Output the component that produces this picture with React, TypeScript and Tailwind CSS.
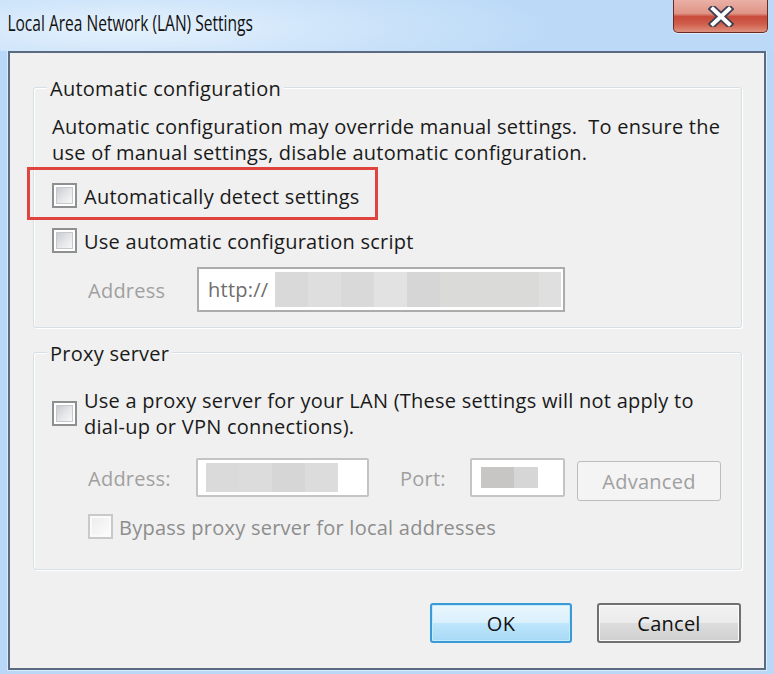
import React from "react";

const font = { fontFamily: '"Open Sans", "Noto Sans", "Liberation Sans", sans-serif' };

function Check({ disabled = false }: { disabled?: boolean }) {
  return (
    <div
      className={
        "w-[25px] h-[25px] shrink-0 border-2 p-[2px] " +
        (disabled ? "border-[#c9c9c9] bg-[#fafafa]" : "border-[#8e8f8f] bg-white")
      }
    >
      <div
        className={
          "w-full h-full " +
          (disabled
            ? "bg-[linear-gradient(135deg,#ededed,#fbfbfb)]"
            : "border border-[#c5c8cc] bg-[linear-gradient(135deg,#c9ccd1_0%,#e6e7e9_55%,#f7f7f7_100%)]")
        }
      />
    </div>
  );
}

function Group({ title, children, className = "" }: { title: string; children: React.ReactNode; className?: string }) {
  return (
    <div
      className={
        "relative border border-[#d5dfe5] rounded-[3px] shadow-[inset_1px_1px_0_#ffffff,1px_1px_0_#ffffff] " +
        className
      }
    >
      <div className="absolute left-[13px] top-[-12px] px-[3px] bg-[#f0f0f0] leading-[26px] text-[#1a1a1a]">
        {title}
      </div>
      {children}
    </div>
  );
}

function Blocks({ items }: { items: [number, string][] }) {
  return (
    <div className="flex h-full">
      {items.map(([w, c], i) => (
        <div key={i} style={{ width: w, background: c }} className="h-full" />
      ))}
    </div>
  );
}

export default function App() {
  return (
    <div className="w-[774px] h-[674px] bg-[#b9d8f7] flex flex-col overflow-hidden" style={font}>
      {/* Title bar */}
      <div className="h-[51px] shrink-0 relative flex items-start bg-[radial-gradient(ellipse_420px_60px_at_130px_28px,#e6f2fd_0%,#cfe5fa_50%,#bcdaf7_100%)]">
        <div className="pl-[10px] pt-[8px] text-[21px] leading-[30px] text-[#111] whitespace-nowrap origin-left scale-x-[0.74]">
          Local Area Network (LAN) Settings
        </div>
        <div className="absolute right-[6px] top-0 w-[95px] h-[33px] rounded-b-[5px] border border-t-0 border-[#6b2b25] bg-[linear-gradient(180deg,#eab0a6_0%,#df9486_42%,#c8493a_52%,#cf5e4d_75%,#e0907e_100%)] flex items-center justify-center shadow-[0_1px_0_#ffffff80]">
          <svg width="26" height="21" viewBox="0 0 26 21">
            <path d="M5 3 L21 18 M21 3 L5 18" stroke="#3d3f52" strokeWidth="7.5" strokeLinecap="square" fill="none" />
            <path d="M5 3 L21 18 M21 3 L5 18" stroke="#ffffff" strokeWidth="4" strokeLinecap="square" fill="none" />
          </svg>
        </div>
      </div>

      {/* Window body */}
      <div className="mx-[8px] mb-[4px] flex-1 border-2 border-[#5a6a80] bg-[#f0f0f0] shadow-[0_0_0_1px_#d8eafb] pl-[23px] pr-[22px] pt-[34px] pb-[25px] flex flex-col text-[20px] tracking-[0.25px] leading-[26px] text-[#1a1a1a]">
        <Group title="Automatic configuration" className="h-[241px]">
          <div className="pl-[18px] pt-[26px]">
            <div className="whitespace-nowrap">Automatic configuration may override manual settings.&nbsp; To ensure the</div>
            <div>use of manual settings, disable automatic configuration.</div>
            <div className="relative mt-[17px] flex items-center gap-[7px] h-[25px]">
              <Check />
              <span className="pt-[2px]">Automatically detect settings</span>
              <div className="absolute left-[-25px] top-[-16px] w-[351px] h-[53px] border-[3px] border-[#e0443e]" />
            </div>
            <div className="mt-[20px] flex items-center gap-[7px] h-[25px]">
              <Check />
              <span className="pt-[2px]">Use automatic configuration script</span>
            </div>
            <div className="mt-[14px] flex items-center h-[45px]">
              <span className="w-[145px] pl-[36px] pt-[2px] text-[#a0a0a0]">Address</span>
              <div className="w-[368px] h-[45px] border-2 border-[#acacac] bg-white p-[2px]">
                <div className="flex h-full items-stretch">
                  <div className="w-[75px] pl-[7px] text-[#6d6d6d] flex items-center bg-white">http://</div>
                  <div className="flex-1 py-[1px]">
                    <Blocks
                      items={[
                        [33, "#d9d9d9"],
                        [33, "#dedede"],
                        [33, "#d9d9d9"],
                        [33, "#e2e2e2"],
                        [33, "#d6d6d6"],
                        [99, "#dadad9"],
                        [22, "#dfdfdf"],
                      ]}
                    />
                  </div>
                </div>
              </div>
            </div>
          </div>
        </Group>

        <Group title="Proxy server" className="mt-[24px] h-[218px]">
          <div className="pl-[18px] pt-[33px]">
            <div className="flex items-center gap-[7px]">
              <Check />
              <div className="whitespace-nowrap pt-[2px]">
                <div>Use a proxy server for your LAN (These settings will not apply to</div>
                <div>dial-up or VPN connections).</div>
              </div>
            </div>
            <div className="mt-[18px] flex items-start">
              <div className="h-[39px] w-[144px] pl-[36px] pt-[2px] flex items-center text-[#a0a0a0]">Address:</div>
              <div className="w-[173px] h-[39px] border-2 border-[#c4c4c4] rounded-[2px] bg-white px-[8px] py-[3px]">
                <Blocks
                  items={[
                    [33, "#dadada"],
                    [33, "#dcdcdc"],
                    [33, "#d6d6d6"],
                    [33, "#dcdcdc"],
                  ]}
                />
              </div>
              <div className="h-[39px] w-[101px] pl-[31px] pt-[2px] flex items-center text-[#a0a0a0]">Port:</div>
              <div className="w-[95px] h-[39px] border-2 border-[#c4c4c4] rounded-[2px] bg-white pl-[9px] py-[7px]">
                <Blocks
                  items={[
                    [33, "#c8c6c4"],
                    [24, "#d6d6d6"],
                  ]}
                />
              </div>
              <div className="ml-[12px] mt-[3px] w-[144px] h-[40px] pt-[2px] border border-[#bcbcbc] rounded-[3px] bg-[#f4f4f4] flex items-center justify-center text-[#a0a0a0]">
                Advanced
              </div>
            </div>
            <div className="mt-[13px] ml-[36px] flex items-center gap-[6px] h-[25px]">
              <Check disabled />
              <span className="pt-[2px] text-[#8d8d8d]">Bypass proxy server for local addresses</span>
            </div>
          </div>
        </Group>

        <div className="mt-auto flex justify-end gap-[25px] pr-[1px]">
          <div className="w-[142px] h-[40px] pt-[1px] rounded-[3px] border-2 border-[#3a9ad8] shadow-[inset_0_0_0_1px_#c4ebfc] bg-[linear-gradient(180deg,#eaf6fd_0%,#d9f0fc_50%,#bee6fd_51%,#a7d9f5_100%)] flex items-center justify-center text-[#111]">
            OK
          </div>
          <div className="w-[144px] h-[40px] pt-[1px] rounded-[3px] border-2 border-[#707070] shadow-[inset_0_0_0_1px_#fcfcfc] bg-[linear-gradient(180deg,#f2f2f2_0%,#ebebeb_50%,#dddddd_51%,#cfcfcf_100%)] flex items-center justify-center text-[#111]">
            Cancel
          </div>
        </div>
      </div>
    </div>
  );
}
